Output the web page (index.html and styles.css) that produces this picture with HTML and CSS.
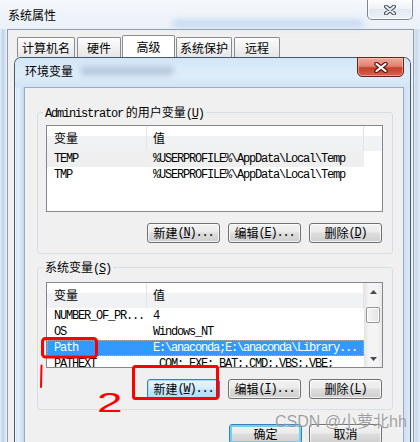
FILE: index.html
```html
<!DOCTYPE html>
<html lang="zh-CN">
<head>
    <meta charset="UTF-8">
    <title>环境变量</title>
    <link rel="stylesheet" href="styles.css">
</head>
<body>
<div class="win">
    <div class="win_title">
        <span class="caption">系统属性</span>
        <span class="haze"></span>
        <a href="javascript:;" class="close gray">
            <svg width="12" height="10" viewBox="0 0 12 10"><path d="M2 1.5L10 8.5M10 1.5L2 8.5" stroke="#3b4652" stroke-width="4" stroke-linecap="round"/><path d="M2 1.5L10 8.5M10 1.5L2 8.5" stroke="#eef1f4" stroke-width="2" stroke-linecap="round"/></svg>
        </a>
    </div>
    <div class="win_body">
        <div class="tabs">
            <a href="javascript:;" class="tab t1">计算机名</a>
            <a href="javascript:;" class="tab t2">硬件</a>
            <a href="javascript:;" class="tab t3 on">高级</a>
            <a href="javascript:;" class="tab t4">系统保护</a>
            <a href="javascript:;" class="tab t5">远程</a>
        </div>
    </div>
</div>

<div class="dlg">
    <div class="dlg_title">
        <span class="caption">环境变量</span>
        <span class="haze2"></span>
        <a href="javascript:;" class="close red">
            <svg width="14" height="11" viewBox="0 0 14 11"><path d="M2.5 2L11.5 9M11.5 2L2.5 9" stroke="#5b1710" stroke-width="4.5" stroke-linecap="round"/><path d="M2.5 2L11.5 9M11.5 2L2.5 9" stroke="#fff" stroke-width="2.2" stroke-linecap="round"/></svg>
        </a>
    </div>
    <div class="dlg_body">
        <fieldset class="group g1">
            <legend><span class="en">Administrator</span> 的用户变量<span class="en">(<u>U</u>)</span></legend>
            <div class="list l1">
                <div class="cols">
                    <div class="head"><span class="c1">变量</span><span class="c2">值</span></div>
                    <div class="row gray"><span class="c1">TEMP</span><span class="c2">%USERPROFILE%\AppData\Local\Temp</span></div>
                    <div class="row"><span class="c1">TMP</span><span class="c2">%USERPROFILE%\AppData\Local\Temp</span></div>
                </div>
            </div>
            <div class="btns">
                <a href="javascript:;" class="btn">新建<span class="en">(<u>N</u>)...</span></a>
                <a href="javascript:;" class="btn">编辑<span class="en">(<u>E</u>)...</span></a>
                <a href="javascript:;" class="btn">删除<span class="en">(<u>D</u>)</span></a>
            </div>
        </fieldset>
        <fieldset class="group g2">
            <legend>系统变量<span class="en">(<u>S</u>)</span></legend>
            <div class="list l2">
                <div class="cols">
                    <div class="head"><span class="c1">变量</span><span class="c2">值</span></div>
                    <div class="row"><span class="c1">NUMBER_OF_PR...</span><span class="c2">4</span></div>
                    <div class="row"><span class="c1">OS</span><span class="c2">Windows_NT</span></div>
                    <div class="row sel"><span class="c1">Path</span><span class="c2">E:\anaconda;E:\anaconda\Library...</span></div>
                    <div class="row"><span class="c1">PATHEXT</span><span class="c2">.COM;.EXE;.BAT;.CMD;.VBS;.VBE;</span></div>
                </div>
                <div class="sbar">
                    <div class="arrow"><svg width="7" height="4" viewBox="0 0 7 4"><path d="M3.5 0L7 4H0z" fill="#4a4a4a"/></svg></div>
                    <div class="thumb"></div>
                    <div class="sp"></div>
                    <div class="arrow"><svg width="7" height="4" viewBox="0 0 7 4"><path d="M0 0H7L3.5 4z" fill="#4a4a4a"/></svg></div>
                </div>
            </div>
            <div class="btns">
                <a href="javascript:;" class="btn def">新建<span class="en">(<u>W</u>)...</span></a>
                <a href="javascript:;" class="btn">编辑<span class="en">(<u>I</u>)...</span></a>
                <a href="javascript:;" class="btn">删除<span class="en">(<u>L</u>)</span></a>
            </div>
        </fieldset>
        <div class="foot">
            <a href="javascript:;" class="btn focus">确定</a>
            <a href="javascript:;" class="btn">取消</a>
        </div>
    </div>
</div>

<svg class="marks" width="420" height="442" viewBox="0 0 420 442">
    <rect x="42.5" y="338.5" width="54" height="18.5" rx="3" fill="none" stroke="#f00" stroke-width="3"/>
    <path d="M41.5 365.5L41 387" stroke="#f00" stroke-width="2" fill="none" stroke-linecap="round"/>
    <rect x="133.5" y="366.5" width="84" height="32" rx="2" fill="none" stroke="#f00" stroke-width="3"/>
    <text x="0" y="0" transform="translate(97 412) scale(1.7 1)" font-family="Liberation Sans" font-size="27" fill="#f00">2</text>
</svg>
<span class="mark">CSDN @小萝北hh</span>
</body>
</html>
```

FILE: styles.css
```css
*{
    margin:0;
    padding:0;
    box-sizing:border-box;
}
body{
    width:420px;
    height:442px;
    overflow:hidden;
    position:relative;
    font-family:"Noto Sans CJK SC",sans-serif;
    font-size:12px;
    color:#000;
    background:#dbe6f2;
}
a{
    color:#000;
    text-decoration:none;
}
.en{
    font-family:"Liberation Mono",monospace;
    font-size:12px;
    letter-spacing:-1.2px;
}
u{
    text-decoration:underline;
}

/* outer window */
.win{
    height:442px;
    display:flex;
    flex-direction:column;
    padding:0 6px 0 7px;
    background:linear-gradient(90deg,#e6eef7 0,#bcd2ec 3px,#eef4fa 7px,#eef4fa 413px,#c6d9ee 416px,#dfe9f5 420px);
}
.win_title{
    height:29px;
    display:flex;
    align-items:flex-start;
    margin:0 -6px 0 -7px;
    padding:0 7px 0 8px;
    background:linear-gradient(180deg,#f4f7fb 0,#eaf1f8 100%);
}
.win_title .caption{
    padding-top:7px;
    line-height:16px;
}
.haze{
    width:190px;
    height:7px;
    margin:20px 0 0 117px;
    background:#b8cff0;
    filter:blur(3px);
    opacity:.8;
}
.close{
    display:flex;
    align-items:center;
    justify-content:center;
    margin-left:auto;
}
.close.gray{
    width:46px;
    height:20px;
    border:1px solid #7b8796;
    border-top:0;
    border-radius:0 0 5px 5px;
    background:linear-gradient(#fbfcfd 0,#eef2f6 50%,#e1e8ef 50%,#eef3f8 100%);
    box-shadow:inset 0 0 0 1px rgba(255,255,255,.7);
}
.win_body{
    flex:1;
    border:1px solid #8e9cae;
    border-bottom:0;
    background:#f0f0f0;
    padding:5px 0 0 9px;
}
.tabs{
    display:flex;
    align-items:flex-end;
    height:22px;
}
.tab{
    height:20px;
    border:1px solid #898c95;
    border-bottom:0;
    border-radius:2px 2px 0 0;
    background:linear-gradient(#fdfdfd,#e6e6e6);
    display:flex;
    align-items:center;
    justify-content:center;
    line-height:14px;
    margin-right:2px;
}
.t1{width:58px;}
.t2{width:44px;}
.t3{width:53px;}
.t4{width:56px;}
.t5{width:46px;}
.tab.on{
    height:22px;
    background:#fff;
    margin:0 1px 0 -1px;
}

/* environment dialog */
.dlg{
    position:absolute;
    left:14px;
    top:57px;
    width:397px;
    height:400px;
    border:1px solid #45596f;
    border-bottom:0;
    border-radius:7px 7px 0 0;
    padding:0 6px 0 9px;
    display:flex;
    flex-direction:column;
    background:linear-gradient(90deg,#cfe0f3 0,#e3eefa 4px,#c3d8ef 9px,#c3d8ef 380px,#d9e7f6 100%);
    box-shadow:inset 1px 1px 0 rgba(255,255,255,.7);
}
.dlg_title{
    height:29px;
    display:flex;
    align-items:flex-start;
    margin:0 -6px 0 -9px;
    padding:0 6px 0 10px;
    border-radius:6px 6px 0 0;
    background:linear-gradient(180deg,#d3e6f7 0,#deedfa 60%,#d2e4f5 100%);
}
.dlg_title .caption{
    padding-top:6px;
    line-height:14px;
}
.haze2{
    width:92px;
    height:8px;
    margin:9px 0 0 8px;
    background:#8ea4bf;
    filter:blur(3px);
    opacity:.55;
}
.close.red{
    width:47px;
    height:20px;
    margin-top:-1px;
    border:1px solid #6b2219;
    border-radius:0 0 5px 5px;
    background:linear-gradient(#eba99b 0,#df8472 45%,#c6412b 55%,#d3644f 100%);
    box-shadow:inset 0 0 0 1px rgba(255,210,200,.5);
}
.dlg_body{
    flex:1;
    border:1px solid #9aabbf;
    background:#f0f0f0;
    padding:0 10px 0 12px;
}
.group{
    border:1px solid #d5dfe5;
    border-radius:3px;
    padding:6px 9px 10px 8px;
    min-width:0;
}
.group legend{
    height:14px;
    line-height:14px;
    padding:0 2px;
    margin-left:-3px;
}
.g1{
    margin-top:17px;
}
.g2{
    margin-top:6px;
    padding-top:8px;
}

/* list views */
.list{
    display:flex;
    border:1px solid #828790;
    background:#fff;
    overflow:hidden;
}
.l1{
    height:87px;
}
.l1 .cols{
    flex:1;
}
.l2{
    height:86px;
}
.l2 .cols{
    width:317px;
}
.head{
    display:flex;
    height:25px;
    background:linear-gradient(#fff 0,#fff 40%,#f1f2f4 40%,#f1f2f4 100%);
}
.head span{
    display:block;
    padding-top:5px;
    line-height:14px;
    border-right:1px solid #e2e4e8;
}
.c1{
    width:100px;
    padding-left:7px;
}
.c2{
    width:217px;
    padding-left:6px;
}
.row{
    display:flex;
    width:317px;
    height:16px;
    line-height:16px;
}
.row span{
    display:block;
    white-space:nowrap;
    overflow:hidden;
    font-family:"Liberation Mono",monospace;
    font-size:12px;
    letter-spacing:-1.2px;
}
.row.gray{
    background:#efefef;
}
.row.sel{
    background:#3399ff;
    color:#fff;
    outline:1px dotted #f0a040;
    outline-offset:-1px;
}
.sbar{
    width:18px;
    display:flex;
    flex-direction:column;
    align-items:center;
    background:linear-gradient(90deg,#e4e4e4 0,#f4f4f4 25%,#f4f4f4 75%,#e8e8e8 100%);
}
.arrow{
    width:18px;
    height:17px;
    display:flex;
    align-items:center;
    justify-content:center;
}
.thumb{
    width:14px;
    height:16px;
    margin-top:7px;
    border:1px solid #979797;
    border-radius:2px;
    background:linear-gradient(90deg,#f6f6f6,#e2e2e2);
    box-shadow:inset 0 0 0 1px #fff;
}
.sp{
    flex:1;
}

/* buttons */
.btns{
    display:flex;
    justify-content:flex-end;
    gap:8px;
    margin-top:11px;
    padding-right:1px;
}
.btn{
    width:73px;
    height:20px;
    border:1px solid #707070;
    border-radius:3px;
    background:linear-gradient(#f2f2f2 0,#ebebeb 45%,#dddddd 50%,#cfcfcf 100%);
    box-shadow:inset 0 0 0 1px rgba(255,255,255,.75);
    display:flex;
    align-items:center;
    justify-content:center;
    line-height:14px;
    white-space:nowrap;
}
.btn.def{
    border-color:#3c7fb1;
    background:linear-gradient(#e6f4fc 0,#d9eefb 45%,#c4e5f9 50%,#b3dcf4 100%);
    box-shadow:inset 0 0 0 1px #a9dcf5;
}
.btn.focus{
    border-color:#3c7fb1;
    box-shadow:inset 0 0 0 2px #6fd2f5;
}
.foot{
    display:flex;
    justify-content:flex-end;
    gap:7px;
    margin-top:14px;
    padding-right:11px;
}

/* annotations */
.marks{
    position:absolute;
    left:0;
    top:0;
    pointer-events:none;
}
.mark{
    position:absolute;
    left:275px;
    top:412px;
    font-family:"Liberation Sans","Noto Sans CJK SC",sans-serif;
    font-size:16px;
    line-height:20px;
    color:rgba(95,95,95,.6);
    text-shadow:0 0 1px rgba(255,255,255,.8);
    white-space:nowrap;
}
```
